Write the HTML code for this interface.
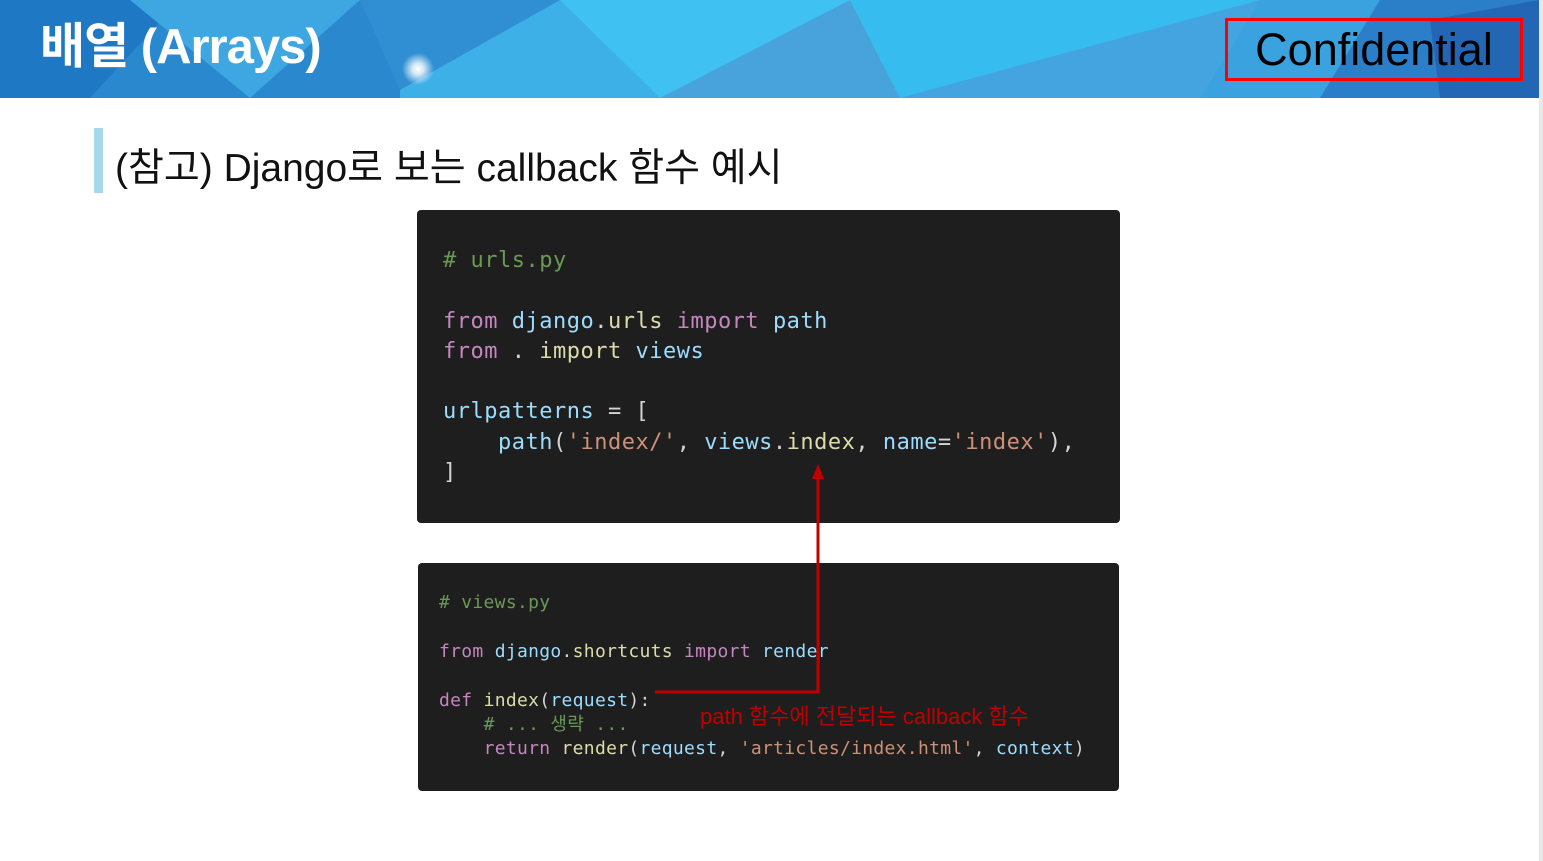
<!DOCTYPE html>
<html><head><meta charset="utf-8"><style>
body{margin:0;width:1543px;height:861px;background:#fff;position:relative;overflow:hidden;font-family:"Liberation Sans","Noto Sans CJK KR",sans-serif}
.hdr{position:absolute;left:0;top:0;width:1539px;height:98px;overflow:hidden;background:#3cb8ea}
.edge{position:absolute;left:1539px;top:0;width:4px;height:861px;background:#e8e8e8}
.title{position:absolute;left:40px;top:7px;font-size:49px;color:#fff;font-weight:bold;letter-spacing:-1px}
.conf{position:absolute;left:1225px;top:18px;width:292px;height:57px;border:3px solid #f00;font-size:45px;color:#000;text-align:center;line-height:57px}
.bar{position:absolute;left:94px;top:128px;width:9px;height:65px;background:#a4d8ec}
.sub{position:absolute;left:115px;top:137px;font-size:39px;color:#111;letter-spacing:0px}
.code{position:absolute;background:#1e1e1e;border-radius:4px;margin:0;font-family:"DejaVu Sans Mono","Liberation Mono","Noto Sans CJK KR",monospace;color:#d4d4d4;white-space:pre}
.c1{left:417px;top:210px;width:703px;height:313px;font-size:22px;line-height:30.3px;letter-spacing:0.5px;padding:0}
.c2{left:418px;top:563px;width:701px;height:228px;font-size:18px;line-height:24.4px;letter-spacing:0.3px}
.cm{color:#6a9955}.kw{color:#c586c0}.v{color:#9cdcfe}.f{color:#dcdcaa}.s{color:#ce9178}
.c1 pre,.c2 pre{margin:0;position:absolute;font:inherit;letter-spacing:inherit}
</style></head><body>
<div class="hdr">
<svg width="1539" height="98" style="position:absolute;left:0;top:0">
<defs><radialGradient id="g"><stop offset="0" stop-color="#fff"/><stop offset="0.35" stop-color="#fff" stop-opacity="0.8"/><stop offset="1" stop-color="#fff" stop-opacity="0"/></radialGradient></defs>
<polygon points="0,0 560,0 400,98 0,98" fill="#2a88cf"/>
<polygon points="0,0 180,0 90,98 0,98" fill="#1f78c4"/>
<polygon points="130,0 360,0 250,98" fill="#3ea6e0"/>
<polygon points="360,0 560,0 400,90" fill="#2f8fd2"/>
<polygon points="560,0 850,0 660,98" fill="#3fc2f2"/>
<polygon points="400,90 560,0 660,98 400,98" fill="#3eb0e8"/>
<polygon points="660,98 850,0 900,98" fill="#48a3dd"/>
<polygon points="850,0 1260,0 900,98" fill="#36bcef"/>
<polygon points="900,98 1260,0 1200,98" fill="#43a4df"/>
<polygon points="1260,0 1539,0 1539,98 1200,98" fill="#3aa2df"/>
<polygon points="1380,0 1539,0 1539,98 1320,98" fill="#2b7fc8"/>
<polygon points="1430,20 1539,0 1539,98 1440,98" fill="#2266b4"/>
<circle cx="418" cy="69" r="16" fill="url(#g)"/>
</svg>
<div class="title">배열 (Arrays)</div>
<div class="conf">Confidential</div>
</div>
<div class="edge"></div>
<div class="bar"></div>
<div class="sub">(참고) Django로 보는 callback 함수 예시</div>
<div class="code c1"><pre style="left:26px;top:36px"><span class="cm"># urls.py</span>

<span class="kw">from</span> <span class="v">django</span>.<span class="f">urls</span> <span class="kw">import</span> <span class="v">path</span>
<span class="kw">from</span> . <span class="f">import</span> <span class="v">views</span>

<span class="v">urlpatterns</span> = [
    <span class="v">path</span>(<span class="s">'index/'</span>, <span class="v">views</span>.<span class="f">index</span>, <span class="v">name</span>=<span class="s">'index'</span>),
]</pre></div>
<div class="code c2"><pre style="left:21px;top:28px"><span class="cm"># views.py</span>

<span class="kw">from</span> <span class="v">django</span>.<span class="f">shortcuts</span> <span class="kw">import</span> <span class="v">render</span>

<span class="kw">def</span> <span class="f">index</span>(<span class="v">request</span>):
    <span class="cm"># ... 생략 ...</span>
    <span class="kw">return</span> <span class="f">render</span>(<span class="v">request</span>, <span class="s">'articles/index.html'</span>, <span class="v">context</span>)</pre></div>
<svg width="1543" height="861" style="position:absolute;left:0;top:0">
<polyline points="655,692 818,692 818,475" fill="none" stroke="#c00000" stroke-width="3"/>
<polygon points="812,479 818,464 824,479" fill="#c00000"/>
</svg>
<div style="position:absolute;left:700px;top:699px;font-size:22px;color:#c00000">path 함수에 전달되는 callback 함수</div>
</body></html>
